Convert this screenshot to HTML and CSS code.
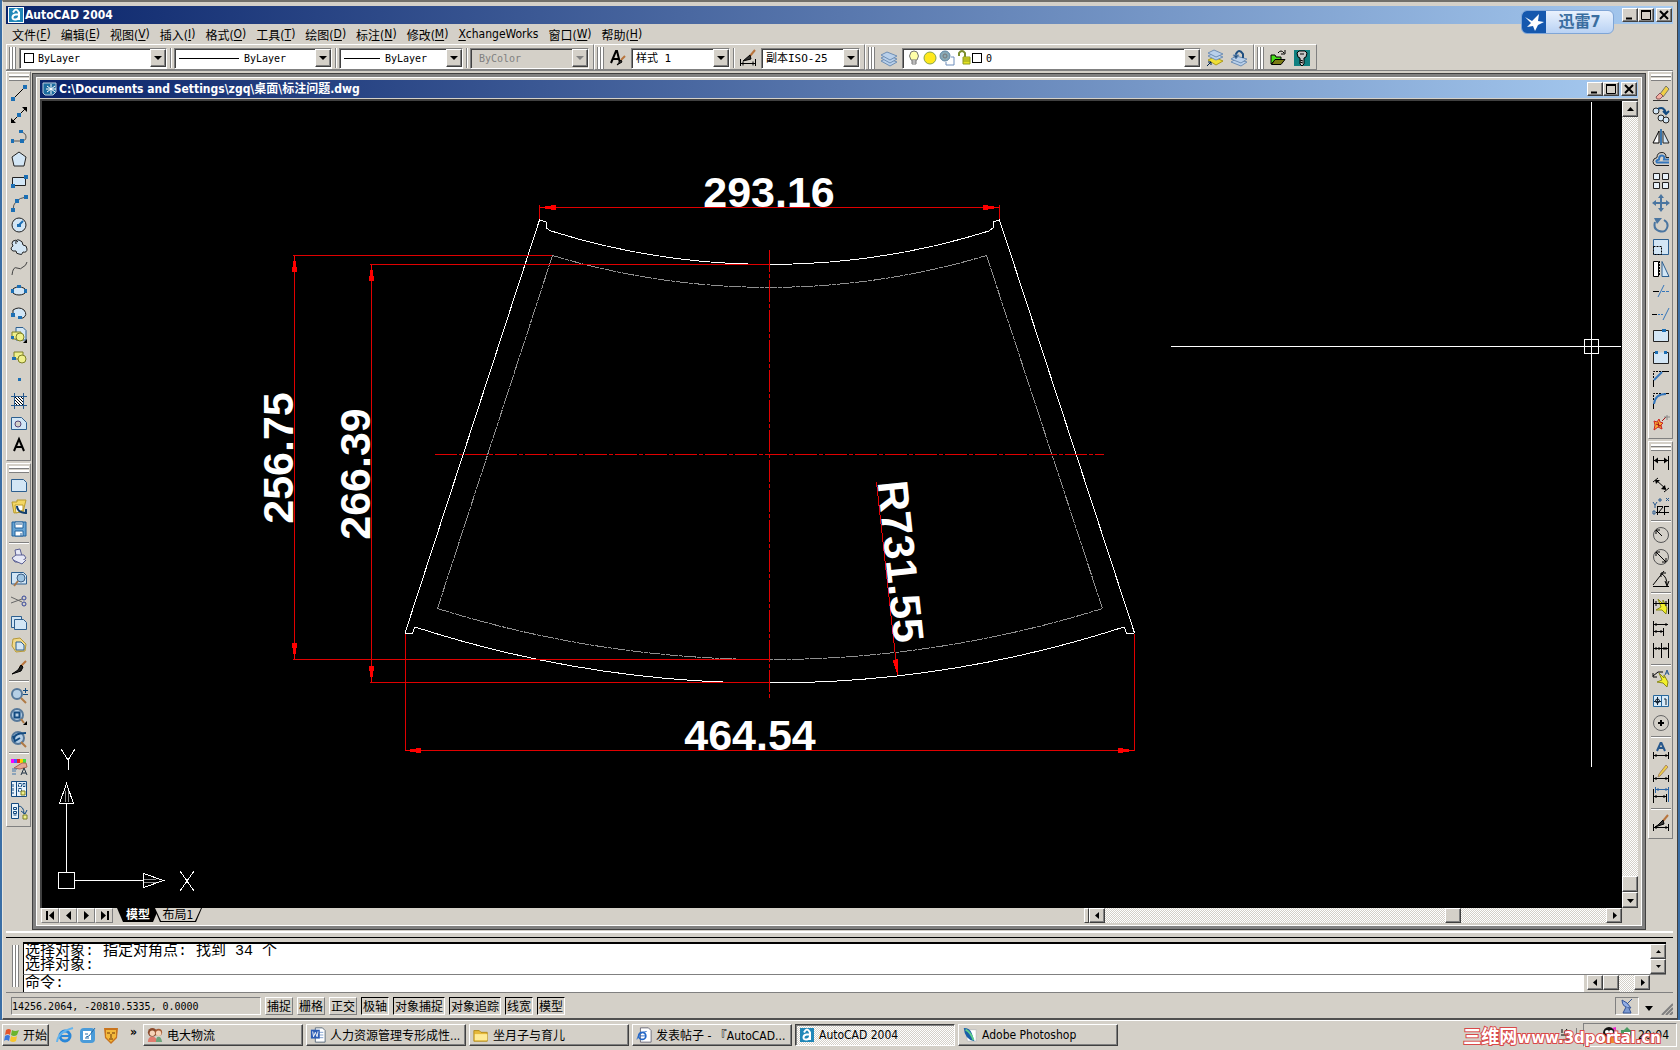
FILE: index.html
```
<!DOCTYPE html>
<html lang="zh-CN">
<head>
    <meta charset="UTF-8">
    <meta name="viewport" content="width=device-width, initial-scale=1.0">
    <title>AutoCAD 2004</title>
    <link rel="stylesheet" href="styles.css">
</head>
<body>
<div class="app">
    <!-- title bar -->
    <header class="titlebar">
        <svg class="logo" viewBox="0 0 16 16"><rect width="16" height="16" fill="#fff"/><rect x="1" y="1" width="14" height="14" fill="#2087b8"/><path d="M5 5.500Q8-.5 11 5.500V13M11 7.500H7.500Q4.500 8 4.500 10.500T8 12.500Q10.500 12 11 9.500" fill="none" stroke="#fff" stroke-width="2"/></svg>
        <span class="caption">AutoCAD 2004</span>
        <div class="winbtns">
            <button aria-label="Minimize"><svg viewBox="0 0 12 10"><path d="M2 8.500h6" stroke-width="2"/></svg></button>
            <button aria-label="Restore"><svg viewBox="0 0 12 10"><path d="M1.500 1v8.500h9V1"/><path d="M1 1h10" stroke-width="2"/></svg></button>
            <button aria-label="Close" class="close"><svg viewBox="0 0 12 10"><path d="M2 1l8 8M10 1L2 9" stroke-width="2"/></svg></button>
        </div>
    </header>
    <a href="#" class="thunder">
        <svg viewBox="0 0 24 24"><path d="M0 0h24v24H0z" fill="#1558ae"/><path d="M3 6l7 4 7-7-1 7 6 1-6 3-3 6-2-5-6 1 4-4z" fill="#fff"/></svg>
        <span>迅雷7</span>
    </a>

    <nav class="menu">
        <button>文件(<u>F</u>)</button>
        <button>编辑(<u>E</u>)</button>
        <button>视图(<u>V</u>)</button>
        <button>插入(<u>I</u>)</button>
        <button>格式(<u>O</u>)</button>
        <button>工具(<u>T</u>)</button>
        <button>绘图(<u>D</u>)</button>
        <button>标注(<u>N</u>)</button>
        <button>修改(<u>M</u>)</button>
        <button><u>X</u>changeWorks</button>
        <button>窗口(<u>W</u>)</button>
        <button>帮助(<u>H</u>)</button>
    </nav>

    <!-- top toolbars -->
    <div class="toolrow">
        <div class="hbar">
            <i class="grip"></i>
            <label class="combo w148"><i class="box"></i><select aria-label="Color"><option>ByLayer</option></select><b></b></label>
            <i class="vsep"></i>
            <label class="combo w158"><i class="line l60"></i><select aria-label="Linetype"><option>ByLayer</option></select><b></b></label>
            <i class="vsep"></i>
            <label class="combo w124"><i class="line l36"></i><select aria-label="Lineweight"><option>ByLayer</option></select><b></b></label>
            <i class="vsep"></i>
            <label class="combo w119 off"><select aria-label="Plot style" disabled><option>ByColor</option></select><b></b></label>
        </div>
        <div class="hbar">
            <i class="grip"></i>
            <button class="tool" aria-label="Text style"><svg viewBox="0 0 18 18"><path d="M2 14L7 2h1l3 12M4 10h6" stroke-width="2"/><path d="M16 7l-4 4" stroke="#b8743c" stroke-width="2"/><path d="M12 11l-4 5 5-3z" fill="#444"/></svg></button>
            <label class="combo w99"><select aria-label="Text style"><option>样式 1</option></select><b></b></label>
            <i class="vsep"></i>
            <button class="tool" aria-label="Dimension style"><svg viewBox="0 0 18 18"><path d="M1.500 10v7M16.500 10v7M2 14.500h14M4 12.500v4M14 12.500v4"/><path d="M16 1l-5 6" stroke="#b8743c" stroke-width="2"/><path d="M11 6l-7 6 8-2z" fill="#333"/></svg></button>
            <label class="combo w99"><select aria-label="Dimension style"><option>副本ISO-25</option></select><b></b></label>
        </div>
        <div class="hbar">
            <i class="grip"></i>
            <button class="tool" aria-label="Layers"><svg viewBox="0 0 18 18" class="sheets"><path d="M1 12l6-3 10 4-7 4z"/><path d="M1 9l6-3 10 4-7 4z"/><path d="M1 6l6-3 10 4-7 4z"/></svg></button>
            <label class="combo w299">
                <svg class="lay" viewBox="0 0 65 16" fill="none" stroke="#777"><path d="M4 10Q1 6 4 2q3-2 6 0 3 4 0 8z" fill="#ffffa8"/><path d="M5 10v4h4v-4M5 12h4"/><circle cx="23" cy="8" r="6" fill="#ffe81c" stroke="#88a34a"/><circle cx="38" cy="6" r="5" fill="#89a9b5" stroke="#5f86a5"/><circle cx="38" cy="6" r="2"/><path d="M44 7h3v8h-8v-3" stroke="#6d8dbb"/><path d="M52 6V3q3-4 6 0v4" stroke="#7b8d2d" stroke-width="2"/><path d="M56 7h7v7h-7zM56 9h7M56 11h7" fill="#e5e323" stroke="#8f9b20"/></svg>
                <i class="box"></i><select aria-label="Layer"><option>0</option></select><b></b>
            </label>
            <button class="tool" aria-label="Make layer current"><svg viewBox="0 0 18 18" class="sheets"><path d="M2 11l6-3 9 4-7 4z" fill="#efdf34" stroke="#ab9a20"/><path d="M2 7l6-3 9 4-7 3z"/><path d="M2 4l6-3 9 4-7 3z"/><path d="M1 17l4-4M2 13h3v3" stroke="#024"/></svg></button>
            <button class="tool" aria-label="Layer previous"><svg viewBox="0 0 18 18" class="sheets"><path d="M1 13l5-3 11 3-6 4z"/><path d="M1 10l5-3 11 3-6 4z"/><path d="M6 7V5q3-6 7 0v4" fill="none" stroke="#1f4f80" stroke-width="2"/><path d="M3 6h6L6 10z" fill="#1f4f80"/></svg></button>
        </div>
        <div class="hbar">
            <i class="grip"></i>
            <button class="tool" aria-label="Open"><svg viewBox="0 0 18 18"><path d="M2 15V6h4l1 2h5v3H6z" fill="#49e01c"/><path d="M2.500 15.500L6 10.500h10l-4 5z" fill="#7a7a14"/><path d="M9 4q3-4 6 0M16 1v4h-4"/></svg></button>
            <button class="tool" aria-label="Key"><svg viewBox="0 0 18 18"><path d="M1 1h16v16H1z" fill="#108080" stroke="none"/><path d="M6 2h6l2 2-1 4-2 1v6l-2 2-2-2V9L5 8 4 4z" fill="#c8c8c8"/><path d="M7 5h4M7 11l3 1M7 13l3 1"/></svg></button>
        </div>
    </div>

    <div class="work">
        <!-- draw and standard toolbars -->
        <aside class="dock">
            <div class="vbar">
                <i class="grip"></i>
                <button aria-label="Line"><svg viewBox="0 0 18 18"><path d="M3 15L15 3"/><path class="dot" d="M1 13h4v4H1zM13 1h4v4h-4z"/></svg></button>
                <button aria-label="Construction line"><svg viewBox="0 0 18 18"><path d="M3 15L15 3"/><path d="M1 17v-5l5 5zM17 1v5l-5-5z" fill="#000" stroke="none"/><path class="dot" d="M7 7h4v4H7z"/></svg></button>
                <button aria-label="Polyline"><svg viewBox="0 0 18 18"><path d="M2 13h9q5 0 5-4t-5-5" stroke="#555"/><path class="dot" d="M1 11h3v4H1zM10 11h4v4h-4zM9 2h4v3H9z"/></svg></button>
                <button aria-label="Polygon"><svg viewBox="0 0 18 18"><path class="pale ink" d="M9 2l7 5-2 9H4L2 7z"/></svg></button>
                <button aria-label="Rectangle"><svg viewBox="0 0 18 18"><path class="pale ink" d="M2.500 5.500h13v8h-13z"/><path class="dot" d="M14 3h4v4h-4zM1 12h4v4H1z"/></svg></button>
                <button aria-label="Arc"><svg viewBox="0 0 18 18"><path d="M3 16Q3 5 16 3" stroke="#555"/><path class="dot" d="M1 14h4v4H1zM5 5h4v4H5zM14 1h4v4h-4z"/></svg></button>
                <button aria-label="Circle"><svg viewBox="0 0 18 18"><circle class="pale ink" cx="9" cy="9" r="7"/><path d="M9 9l4-4" stroke="#1c6fb4" stroke-width="2"/><path class="dot" d="M7 8h4v3H7z"/></svg></button>
                <button aria-label="Revision cloud"><svg viewBox="0 0 18 18"><path class="pale ink" d="M6 6Q5 1 9 2t4 5q4 0 4 4t-4 3q-1 4-4 2-3 0-3-3-4 1-5-2 0-2 2-3-2-3 0-5 3-2 5 1"/></svg></button>
                <button aria-label="Spline"><svg viewBox="0 0 18 18"><path d="M2 15q1-9 5-7t6-1q3-1 4-5" stroke="#444"/></svg></button>
                <button aria-label="Ellipse"><svg viewBox="0 0 18 18"><ellipse class="pale ink" cx="9" cy="9" rx="7" ry="4"/><path class="dot" d="M1 7h3v4H1zM14 7h3v4h-3zM7 3h4v3H7z"/></svg></button>
                <button aria-label="Ellipse arc"><svg viewBox="0 0 18 18"><path class="pale ink" d="M3 11V6q6-4 11 0 4 5-1 8H9"/><path class="dot" d="M1 9h4v4H1zM8 12h4v3H8z"/></svg></button>
                <button aria-label="Insert block"><svg viewBox="0 0 18 18"><path class="pale" d="M6 1.500h7l3 3V14H6z"/><path d="M2 6h9v7H2z" class="yel"/><circle class="yel" cx="10" cy="11" r="4"/><path d="M17 13v4h-4z" fill="#000" stroke="none"/><path class="dot" d="M1 10h3v3H1z"/></svg></button>
                <button aria-label="Make block"><svg viewBox="0 0 18 18"><path class="yel" d="M4 4h9v7H4z"/><circle class="yel" cx="12" cy="11" r="4"/><path class="dot" d="M2 9h4v3H2z"/></svg></button>
                <button aria-label="Point"><svg viewBox="0 0 18 18"><path class="dot" d="M8 8h3v3H8z"/></svg></button>
                <button aria-label="Hatch"><svg viewBox="0 0 18 18"><path d="M1 4.500h16M1 13.500h16M4.500 1v16M13.500 1v16" stroke="#285b90"/><path d="M5 5h8v8H5z" fill="#fff" stroke="none"/><path d="M5 5l8 8M8 5l5 5M5 8l5 5M11 5l2 2M5 11l2 2"/></svg></button>
                <button aria-label="Region"><svg viewBox="0 0 18 18"><path class="pale" d="M1.500 3.500h10l5 5v7h-15z"/><circle cx="8" cy="10" r="3" fill="#d4d0c8" stroke="#547"/></svg></button>
                <button aria-label="Text"><svg viewBox="0 0 18 18"><path d="M4 15L9 3l5 12M6 11h6" stroke-width="2"/></svg></button>
            </div>
            <div class="vbar">
                <i class="grip"></i>
                <button aria-label="New"><svg viewBox="0 0 18 18"><path class="pale" d="M1.500 3.500h12l3 3v9h-15z"/></svg></button>
                <button aria-label="Open"><svg viewBox="0 0 18 18"><path d="M2 4h5V2h9l-3 12-9 1z" fill="#f4d764" stroke="#b99b2c"/><path d="M5 7h8v5l-7 3z" fill="#fff" stroke="#b99b2c"/><path d="M7 8q0 6 8 7M16 11v5" stroke="#123f6d" stroke-width="2"/></svg></button>
                <button aria-label="Save"><svg viewBox="0 0 18 18"><path d="M2 2h14v14H2z" fill="#66a3d3" stroke="#22639c"/><path d="M5 2h8v6H5zM5 11h8v5H5z" fill="#fff" stroke="#22639c"/><path d="M6 4h6M11 13v3" stroke="#22639c"/></svg></button>
                <i class="hsep"></i>
                <button aria-label="Plot"><svg viewBox="0 0 18 18"><path class="vio" d="M5 2l5-1 2 7H6z"/><path class="vio" d="M2 10l4-3h8l2 3-5 4H5z"/><path class="vio" d="M3 12l9 4 4-4"/></svg></button>
                <button aria-label="Preview"><svg viewBox="0 0 18 18"><path class="pale" d="M1.500 2.500h12l3 3V14h-15z"/><circle cx="11" cy="8" r="4" fill="#9fc5e2" stroke="#3c5e83"/><path d="M8 11l-4 5" stroke="#a6774b" stroke-width="2"/></svg></button>
                <button aria-label="Cut"><svg viewBox="0 0 18 18"><path d="M1 5l11 5M1 11l11-4" stroke="#666"/><circle cx="14" cy="6" r="2" stroke="#349"/><circle cx="14" cy="12" r="2" stroke="#349"/></svg></button>
                <button aria-label="Copy"><svg viewBox="0 0 18 18"><path class="pale" d="M1.500 2.500h10v11h-10z"/><path class="pale" d="M4.500 5.500h9l3 3v7h-12z"/></svg></button>
                <button aria-label="Paste"><svg viewBox="0 0 18 18"><path d="M3 3l7-1 6 6-1 7-9 1-4-6z" fill="#f2d98a" stroke="#b59837"/><path class="pale" d="M6 6h5l3 3v5H6z"/></svg></button>
                <button aria-label="Match properties"><svg viewBox="0 0 18 18"><path d="M16 3l-6 6" stroke="#b8743c" stroke-width="2"/><path d="M11 7l-3 5-6 4 9-3 2-4z" fill="#222"/></svg></button>
                <i class="hsep"></i>
                <button aria-label="Zoom realtime"><svg viewBox="0 0 18 18"><circle class="lens" cx="7" cy="8" r="5"/><path d="M11 12l5 5" class="handle"/><path d="M13 4.500h5M15.500 2v5M13 8.500h5" stroke="#124a80"/></svg></button>
                <button aria-label="Zoom window"><svg viewBox="0 0 18 18"><circle class="lens" cx="7" cy="7" r="6"/><path d="M4.500 4.500h5v5h-5z" stroke="#124a80" stroke-width="2"/><path d="M11 11l3 4" class="handle"/><path d="M17 13v4h-4z" fill="#000" stroke="none"/></svg></button>
                <button aria-label="Zoom previous"><svg viewBox="0 0 18 18"><circle class="lens" cx="8" cy="8" r="6"/><path d="M11 12l5 5" class="handle"/><path d="M4 9q0-6 12-6M3 6l2 5 5-3" stroke="#124a80" stroke-width="2"/></svg></button>
                <i class="hsep"></i>
                <button aria-label="Properties"><svg viewBox="0 0 18 18"><path d="M1 1h3v4H1z" fill="#f0f" stroke="none"/><path d="M4 1h3v4H4z" fill="#55f" stroke="none"/><path d="M7 1h3v4H7z" fill="#e22" stroke="none"/><path d="M10 1h3v4h-3z" fill="#fc0" stroke="none"/><path d="M13 1h3v4h-3z" fill="#4d4" stroke="none"/><path d="M4 10l8-5h4l1 4-7 2z" fill="#e4a694" stroke="#a65"/><path d="M2 11h5M2 13h4M2 16h4" stroke="#47a"/><path d="M11 17l3-7 3 7M12 15h4" stroke="#234"/></svg></button>
                <button aria-label="DesignCenter"><svg viewBox="0 0 18 18"><path d="M1.500 1.500h15v15h-15zM6.500 2v14" fill="#e8f3fb" stroke="#124a80"/><path d="M8.500 3.500h3v3h-3zM13 3.500h2v3h-2zM8.500 8.500h3v3h-3zM3 4v10" stroke="#124a80" stroke-dasharray="3 1"/><path class="yel" d="M11 11h4v4h-4z"/></svg></button>
                <button aria-label="Tool palettes"><svg viewBox="0 0 18 18"><path d="M1.500 1.500h7v15h-7z" fill="#e8f3fb" stroke="#124a80"/><path d="M3.500 5.500h3v2h-3zM3.500 9.500h3v2h-3zM3.500 13h3M8 4q6 0 6 8M11 9l4 3 2-4" stroke="#124a80"/><path class="yel" d="M13 13h4v4h-4z"/></svg></button>
            </div>
        </aside>

        <main class="mdi">
            <section class="child">
                <header class="titlebar">
                    <svg class="logo" viewBox="0 0 16 16"><path d="M1 2h13v9l-3 3H3L1 12z" fill="#1b6c9f" stroke="#bcd"/><path d="M9 3v10M4 8h10M5 5l8 6M13 5l-8 6" stroke="#fff"/></svg>
                    <span class="caption">C:\Documents and Settings\zgq\桌面\标注问题.dwg</span>
                    <div class="winbtns">
                        <button aria-label="Minimize"><svg viewBox="0 0 12 10"><path d="M2 8.500h6" stroke-width="2"/></svg></button>
                        <button aria-label="Maximize"><svg viewBox="0 0 12 10"><path d="M1.500 1v8.500h9V1"/><path d="M1 1h10" stroke-width="2"/></svg></button>
                        <button aria-label="Close" class="close"><svg viewBox="0 0 12 10"><path d="M2 1l8 8M10 1L2 9" stroke-width="2"/></svg></button>
                    </div>
                </header>
                <div class="view">
                    <svg class="drawing">
                        <g transform="translate(-42 -101)">
                            <!-- part outline -->
                            <g class="white">
                                <path d="M405 633L539.500 220L546 222V228L551 231A733 733 0 0 0 989 231L993 228V222L999.500 220L1134.500 633L1127 634L1124 627A1150 1150 0 0 1 415 627L412 634Z"/>
                            </g>
                            <g class="grey">
                                <path d="M552.500 255.500A755 755 0 0 0 986.500 255.500M437.500 608.500A1109 1109 0 0 0 1102.500 608.500M552.500 255.500L437.500 608.500M986.500 255.500L1102.500 608.500"/>
                            </g>
                            <!-- dimension lines -->
                            <g class="red">
                                <path d="M539.500 205V219M999.500 205V219M539.500 207.500H999.500"/>
                                <path d="M293 255.500H552M293 659.500H769M294.500 255V659"/>
                                <path d="M370 264.500H769M370 682.500H769M371.500 264V682"/>
                                <path d="M405.500 634V751M1134.500 634V751M405 750.500H1134"/>
                                <path d="M876.500 482.500L897.500 675"/>
                                <path class="axis" d="M769.500 250V699M435 454.500H1104"/>
                            </g>
                            <g class="arrows">
                                <path d="M540 207.500l16-3v6zM999 207.500l-16-3v6zM405 750.500l16-3v6zM1134 750.500l-16-3v6z"/>
                                <path d="M294.500 256l-3 16h6zM294.500 659l-3-16h6zM371.500 265l-3 16h6zM371.500 682l-3-16h6zM897.500 675l-5-15 6-1z"/>
                            </g>
                            <g class="dims">
                                <text x="769" y="207">293.16</text>
                                <text x="750" y="750">464.54</text>
                                <text transform="translate(293 458) rotate(-90)">256.75</text>
                                <text transform="translate(370 474) rotate(-90)">266.39</text>
                                <text transform="translate(886 563) rotate(84)">R731.55</text>
                            </g>
                            <!-- UCS icon -->
                            <g class="white">
                                <path d="M58.500 872.500h16v16h-16zM66.500 872V803M59.500 803.500h14l-7-20zM75 880.500H143M143.500 873.500v14l20-7z"/>
                                <path d="M61 749l7 11 7-11M68.500 760v10M180 871l14 20M194 871l-14 20"/>
                            </g>
                            <g class="grey solid"><path d="M65.500 802v-11M68.500 802v-11M144 879.500h12M144 882.500h12"/></g>
                            <!-- crosshair -->
                            <g class="white">
                                <path d="M1591.500 102V767M1171 346.500H1621M1584.500 339.500h14v14h-14z"/>
                            </g>
                        </g>
                    </svg>
                    <div class="vscroll">
                        <button class="sb" aria-label="Up"><svg viewBox="0 0 7 7"><path d="M0 5h7L3.500 1z"/></svg></button>
                        <i class="track"></i><i class="thumb"></i>
                        <button class="sb" aria-label="Down"><svg viewBox="0 0 7 7"><path d="M0 2h7L3.500 6z"/></svg></button>
                    </div>
                </div>
                <div class="tabs">
                    <div class="nav">
                        <button aria-label="First"><svg viewBox="0 0 9 9"><path d="M0 0h2v9H0zM8 0v9L3 4.500z"/></svg></button>
                        <button aria-label="Previous"><svg viewBox="0 0 9 9"><path d="M7 0v9L2 4.500z"/></svg></button>
                        <button aria-label="Next"><svg viewBox="0 0 9 9"><path d="M2 0v9l5-4.500z"/></svg></button>
                        <button aria-label="Last"><svg viewBox="0 0 9 9"><path d="M1 0v9l5-4.500zM7 0h2v9H7z"/></svg></button>
                    </div>
                    <button class="tab on">模型</button>
                    <button class="tab">布局1</button>
                    <div class="hscroll">
                        <i class="split"></i>
                        <button class="sb" aria-label="Left"><svg viewBox="0 0 7 7"><path d="M5 0v7L1 3.500z"/></svg></button>
                        <i class="track"></i><i class="thumb"></i><i class="track rest"></i>
                        <button class="sb" aria-label="Right"><svg viewBox="0 0 7 7"><path d="M2 0v7l4-3.500z"/></svg></button>
                    </div>
                </div>
            </section>
        </main>

        <!-- modify and dimension toolbars -->
        <aside class="dock">
            <div class="vbar">
                <i class="grip"></i>
                <button aria-label="Erase"><svg viewBox="0 0 18 18"><path d="M1 16.500h15" stroke="#333"/><path d="M8 10l6-8 3 3-6 8z" fill="#f0cf45" stroke="#776"/><path d="M8 9l3 3-3 3H5l-1-2z" fill="#f4b0a4" stroke="#855"/></svg></button>
                <button aria-label="Copy object"><svg viewBox="0 0 18 18"><circle class="pale ink" cx="4" cy="5" r="3"/><circle class="pale ink" cx="9" cy="12" r="3"/><circle class="pale ink" cx="14" cy="14" r="3"/><path d="M6 3q6-3 8 4M11 5l3 3 3-3" stroke="#124a80" stroke-width="2"/></svg></button>
                <button aria-label="Mirror"><svg viewBox="0 0 18 18"><path d="M7 3v12H1z" fill="#fff"/><path class="pale ink" d="M11 3v12h6z"/><path d="M9 1v16" stroke="#3a76ad" stroke-width="2"/></svg></button>
                <button aria-label="Offset"><svg viewBox="0 0 18 18"><path d="M17 15.500H4q-3-1-3-4t4-4q0-5 5-5 4 0 4 5h3" stroke="#222"/><path d="M17 12.500H5q-2-2 2-3 0-4 3-4t2 4h5" stroke="#3476bb" stroke-width="2"/></svg></button>
                <button aria-label="Array"><svg viewBox="0 0 18 18"><path d="M1.500 1.500h6v6h-6zM10.500 1.500h6v6h-6zM1.500 10.500h6v6h-6zM10.500 10.500h6v6h-6z" fill="#e8f2fa" stroke="#222"/></svg></button>
                <button aria-label="Move"><svg viewBox="0 0 18 18"><path d="M9 3v12M3 9h12" class="steel"/><path d="M9 0l3 4H6zM9 18l3-4H6zM0 9l4-3v6zM18 9l-4-3v6z" fill="#4a75a0" stroke="none"/></svg></button>
                <button aria-label="Rotate"><svg viewBox="0 0 18 18"><path d="M12 4q5 3 3 8t-8 3-4-9" class="steel"/><path d="M2 2h8L5 8z" fill="#4a75a0" stroke="none"/></svg></button>
                <button aria-label="Scale"><svg viewBox="0 0 18 18"><path class="pale" d="M1.500 1.500h15v15h-15z"/><path d="M1.500 8.500h8v8h-8z" stroke-dasharray="2 1"/></svg></button>
                <button aria-label="Stretch"><svg viewBox="0 0 18 18"><path d="M1.500 1.500h5v15h-5z" fill="#fff"/><path class="pale" d="M10 1.500l7 15h-7z"/><path d="M7.500 1v15" stroke-dasharray="2 1"/></svg></button>
                <button aria-label="Trim"><svg viewBox="0 0 18 18"><path d="M1 9.500h6"/><path d="M10 9.500h8" stroke="#3476bb" stroke-dasharray="3 1"/><path d="M6 15l6-12" stroke="#3476bb"/></svg></button>
                <button aria-label="Extend"><svg viewBox="0 0 18 18"><path d="M0 10.500h5"/><path d="M6 10.500h6" stroke="#3476bb" stroke-dasharray="2 1"/><path d="M11 16l6-12" stroke="#3476bb"/></svg></button>
                <button aria-label="Break at point"><svg viewBox="0 0 18 18"><path class="pale ink" d="M1.500 4.500h15v11h-15z"/><path class="dot" d="M10 3h4v3h-4z"/></svg></button>
                <button aria-label="Break"><svg viewBox="0 0 18 18"><path class="pale ink" d="M4 4.500H1.500v11h15v-11H14"/><path class="dot" d="M3 3h3v3H3zM12 3h3v3h-3z"/></svg></button>
                <button aria-label="Chamfer"><svg viewBox="0 0 18 18"><path d="M1.500 8V1.500H9" stroke-dasharray="2 1"/><path d="M1.500 17v-7M10 1.500h7"/><path d="M2 10l8-8" stroke="#3476bb" stroke-width="2"/></svg></button>
                <button aria-label="Fillet"><svg viewBox="0 0 18 18"><path d="M1.500 8V1.500H9" stroke-dasharray="2 1"/><path d="M1.500 17v-6M12 1.500h5"/><path d="M2 12q1-10 12-10" stroke="#3476bb" stroke-width="2"/></svg></button>
                <button aria-label="Explode"><svg viewBox="0 0 18 18"><path d="M2 7l3 1 2-3 1 3 3 1-2 2 1 4-4-2-4 3 1-5z" fill="#f9a935" stroke="#c22"/><path d="M4 10l5 2M6 8l1 5" stroke="#a11"/><path d="M10 7l4-4" stroke="#a11"/><path d="M15 1v5M12 3h6" stroke="#888"/></svg></button>
            </div>
            <div class="vbar">
                <i class="grip"></i>
                <button aria-label="Linear dimension"><svg viewBox="0 0 18 18"><path d="M1.500 2v14M16.500 2v14M2 6.500h14"/><path d="M2 6.500l4-3v6zM16 6.500l-4-3v6z" fill="#000" stroke="none"/></svg></button>
                <button aria-label="Aligned dimension"><svg viewBox="0 0 18 18"><path d="M1 6l5-4M12 16l5-4M4 4l10 9"/><path d="M3 4h5l-4 4zM14 14l-1-5-4 4z" fill="#000" stroke="none"/></svg></button>
                <button aria-label="Ordinate dimension"><svg viewBox="0 0 18 18"><path d="M5.500 8v9M4 14.500h13M5 8.500h6M11 9l-4 5M12.500 8v9M12 8.500h5"/><path d="M1 4l2 3 2-3M3 7v3M7 1h2v2H7zM14 0l3 3M17 0l-3 3M1 13h2v3H1z" stroke="#28588c"/></svg></button>
                <i class="hsep"></i>
                <button aria-label="Radius dimension"><svg viewBox="0 0 18 18"><circle cx="9" cy="9" r="7.500" stroke="#555"/><path d="M4 4l6 6M4 8V4h4"/></svg></button>
                <button aria-label="Diameter dimension"><svg viewBox="0 0 18 18"><circle cx="9" cy="9" r="7.500" stroke="#555"/><path d="M4 4l10 10M4 8V4h4M14 10v4h-4"/></svg></button>
                <button aria-label="Angular dimension"><svg viewBox="0 0 18 18"><path d="M1 16.500h16M1 15L12 1M10 4q5 3 5 11M9 7V3h5M13 11l2 5 2-5"/></svg></button>
                <i class="hsep"></i>
                <button aria-label="Quick dimension"><svg viewBox="0 0 18 18"><path d="M6 1l5 5V2l4 8-1 6-4-4H4l5-3z" class="bolt"/><path d="M1.500 1v15M16.500 1v15M2 5.500h14M4 3v5M14 3v5"/></svg></button>
                <button aria-label="Baseline dimension"><svg viewBox="0 0 18 18"><path d="M1.500 1v15M11.500 8v8M2 4.500h14M2 11.500h9M4 3v3M4 10v3M9 10v3M14 3v3"/></svg></button>
                <button aria-label="Continue dimension"><svg viewBox="0 0 18 18"><path d="M1.500 1v15M9.500 1v15M16.500 1v15M1 6.500h16M4 5v3M7 5v3M12 5v3M14 5v3"/></svg></button>
                <i class="hsep"></i>
                <button aria-label="Quick leader"><svg viewBox="0 0 18 18"><path d="M7 3l5 5V5l4 7-1 5-4-4-6-1 5-2z" class="bolt"/><path d="M1 6l5-4h5M1 3v4h4"/><path d="M13 5l2-5 2 5M14 3h2" stroke="#28588c"/></svg></button>
                <button aria-label="Tolerance"><svg viewBox="0 0 18 18"><path d="M1.500 3.500h15v11h-15zM9.500 3v11" fill="#d9ebf8" stroke="#28689c"/><circle cx="5.500" cy="9" r="2" stroke="#123"/><path d="M5.500 5v8M2 9.500h7M12 7h2v6" stroke="#123"/></svg></button>
                <button aria-label="Center mark"><svg viewBox="0 0 18 18"><circle cx="9" cy="9" r="7.500" stroke="#666"/><path d="M9 6v6M6 9h6" stroke-width="2"/></svg></button>
                <i class="hsep"></i>
                <button aria-label="Dimension edit"><svg viewBox="0 0 18 18"><path d="M5 9L9 0l4 9M6 6h6" stroke="#28588c" stroke-width="2"/><path d="M1.500 10v7M16.500 10v7M2 13.500h14M4 12v3M14 12v3"/></svg></button>
                <button aria-label="Dimension text edit"><svg viewBox="0 0 18 18"><path d="M14 1l2 2-8 9-2 1 1-3z" fill="#f0cf45" stroke="#a86"/><path d="M1.500 11v7M16.500 11v7M2 14.500h14M4 13v3M14 13v3"/></svg></button>
                <button aria-label="Dimension update"><svg viewBox="0 0 18 18"><path d="M3.500 1v6M16.500 1v15M4 3.500h12M6 2v3M14 2v3" stroke="#2c65a5"/><path d="M1.500 3v14M14.500 8v8M2 10.500h12M4 9v3M12 9v3"/></svg></button>
                <i class="hsep"></i>
                <button aria-label="Dimension style"><svg viewBox="0 0 18 18"><path d="M1.500 10v7M16.500 10v7M2 13.500h14M4 12v3M14 12v3"/><path d="M16 1l-5 6" stroke="#b8743c" stroke-width="2"/><path d="M11 6l-5 5-3 2 9-3z" fill="#333"/></svg></button>
            </div>
        </aside>
    </div>

    <!-- command window -->
    <section class="command">
        <i class="grip"></i>
        <div class="cmdbody">
            <div class="history">
                <p>选择对象: 指定对角点: 找到 34 个<br>选择对象:</p>
                <div class="vscroll">
                    <button class="sb" aria-label="Up"><svg viewBox="0 0 7 7"><path d="M1 5h5L3.500 2z"/></svg></button>
                    <button class="sb" aria-label="Down"><svg viewBox="0 0 7 7"><path d="M1 2h5L3.500 5z"/></svg></button>
                </div>
            </div>
            <div class="prompt">
                <label for="cmd">命令:</label><input id="cmd" type="text">
                <div class="hscroll">
                    <button class="sb" aria-label="Left"><svg viewBox="0 0 7 7"><path d="M5 0v7L1 3.500z"/></svg></button>
                    <i class="thumb"></i><i class="track"></i>
                    <button class="sb" aria-label="Right"><svg viewBox="0 0 7 7"><path d="M2 0v7l4-3.500z"/></svg></button>
                </div>
            </div>
        </div>
    </section>

    <footer class="status">
        <span class="coords">14256.2064, -20810.5335, 0.0000</span>
        <button>捕捉</button>
        <button>栅格</button>
        <button>正交</button>
        <button class="down">极轴</button>
        <button class="down">对象捕捉</button>
        <button class="down">对象追踪</button>
        <button class="down">线宽</button>
        <button class="down">模型</button>
        <span class="comm"><svg viewBox="0 0 16 16"><path d="M3 2q0 8 9 8L8 5z" fill="#90aee8" stroke="#345496"/><path d="M8 6l5-5M7 9l-3 6h8l-2-5" fill="#7d9bd2" stroke="#345496"/></svg></span>
        <svg class="drop" viewBox="0 0 8 5"><path d="M0 0h8L4 5z"/></svg>
        <svg class="size" viewBox="0 0 12 12"><path d="M1 12L12 1M5 12l7-7M9 12l3-3" stroke="#808080" stroke-width="2"/></svg>
    </footer>
</div>

<div class="taskbar">
    <button class="start"><svg viewBox="0 0 16 16"><path d="M2 3q3-2 5 0L6 8Q4 6 1 8z" fill="#e4552b"/><path d="M8 3q3 2 7 0l-2 5q-3 2-6 0z" fill="#6ab52f"/><path d="M1 9q3-2 5 0l-1 5q-3-2-5 0z" fill="#3b78dc"/><path d="M7 9q3 2 6 0l-1 5q-3 2-6 0z" fill="#f6c52d"/></svg>开始</button>
    <div class="quick">
        <a href="#" aria-label="Internet Explorer"><svg viewBox="0 0 18 18" fill="none"><circle cx="9" cy="10" r="5" stroke="#2a87d8" stroke-width="3"/><path d="M4 10h10" stroke="#2a87d8" stroke-width="2"/><path d="M1 16Q2 6 17 2" stroke="#63b4ee" stroke-width="2"/></svg></a>
        <a href="#" aria-label="Show desktop"><svg viewBox="0 0 18 18"><rect x="1" y="2" width="15" height="15" rx="4" fill="#4a9bd9"/><path d="M4 5h8v9H4z" fill="#fff"/><path d="M16 2l-6 8-3 1M6 12h4M6 8h3" fill="none" stroke="#256ba8"/></svg></a>
        <a href="#" aria-label="Lion"><svg viewBox="0 0 18 18"><path d="M2 2h14l-1 10-6 6-6-6z" fill="#c9741c"/><path d="M4 4h10v7l-5 5-5-5z" fill="#f3b93b"/><path d="M5 7h3M10 7h3M9 8v4M7 13h4" stroke="#6c3408" fill="none"/></svg></a>
    </div>
    <span class="more">»</span>
    <button class="task"><svg viewBox="0 0 18 18"><circle cx="6" cy="6" r="5" fill="#8a4a2c"/><circle cx="13" cy="6" r="4" fill="#a55c36"/><circle cx="6" cy="7" r="3" fill="#f6d3b8"/><circle cx="13" cy="7" r="3" fill="#f6d3b8"/><path d="M1 17q0-6 5-6t5 6z" fill="#e07b6e"/><path d="M10 17q0-6 3-6t4 6z" fill="#6ca37b"/></svg>电大物流</button>
    <button class="task"><svg viewBox="0 0 18 18"><path d="M6 1h8l3 3v13H6z" fill="#fff" stroke="#567"/><path d="M8 6h7M8 9h7M8 12h7" stroke="#79c"/><path d="M1 3h10v10H1z" fill="#2c5cb4"/><path d="M3 5l1 6 2-5 2 5 1-6" fill="none" stroke="#fff"/></svg>人力资源管理专形成性...</button>
    <button class="task"><svg viewBox="0 0 18 18"><path d="M1 4h6l2 2h7v10H1z" fill="#e6b93a" stroke="#b18818"/><path d="M2 8h14v7H2z" fill="#ffeb96"/></svg>坐月子与育儿</button>
    <button class="task"><svg viewBox="0 0 18 18"><path d="M5 1h9l3 3v13H5z" fill="#fff" stroke="#667"/><circle cx="7" cy="10" r="4" fill="none" stroke="#2468c8" stroke-width="2"/><path d="M4 10h7M1 14Q3 6 12 5" fill="none" stroke="#2468c8"/></svg>发表帖子 - 『AutoCAD...</button>
    <button class="task on"><svg viewBox="0 0 16 16"><rect x="1" y="1" width="14" height="14" fill="#2087b8"/><path d="M5 5.500Q8-.5 11 5.500V13M11 7.500H7.500Q4.500 8 4.500 10.500T8 12.500Q10.500 12 11 9.500" fill="none" stroke="#fff" stroke-width="2"/></svg>AutoCAD 2004</button>
    <button class="task"><svg viewBox="0 0 18 18"><path d="M4 3h12v13H6z" fill="#fff" stroke="#bbb"/><path d="M2 1q7 0 9 6t3 9Q3 14 2 1z" fill="#1a5fa8"/><path d="M4 3q6 3 9 12" stroke="#5fd08a" fill="none" stroke-width="2"/></svg>Adobe Photoshop</button>
    <span class="lang"><svg viewBox="0 0 12 14"><path d="M3 1v4M8 1L5 5M2 7h7M3 12h8" stroke="#000" fill="none"/></svg></span>
    <div class="tray">
        <svg viewBox="0 0 18 18"><circle cx="9" cy="7" r="6" fill="#111"/><circle cx="7" cy="6" r="2" fill="#fff"/><circle cx="11" cy="6" r="2" fill="#fff"/><path d="M3 17q0-7 6-7t6 7z" fill="#f08c2a"/><path d="M12 2l4-1v4z" fill="#e2c"/></svg>
        <svg viewBox="0 0 18 18"><path d="M9 1l3 3h4l-1 5-6 8-6-8V4h3z" fill="#4a9a62"/><path d="M6 6h6v6H6z" fill="#fff"/></svg>
        <span>20:04</span>
    </div>
    <div class="mark"><span>三维网</span>www.3dportal.cn</div>
</div>
</body>
</html>
```
FILE: styles.css
```
*
{
    box-sizing: border-box;
}
body
{
    margin: 0;
    height: 100vh;
    display: flex;
    flex-direction: column;
    overflow: hidden;
    background-color: #3a6ea5;
    color: #000000;
    font-family: "DejaVu Sans Condensed", "Noto Sans CJK SC", sans-serif;
    font-size: 12px;
}
button
{
    font: inherit;
    color: inherit;
    margin: 0;
    padding: 0;
    border: 0;
    background: none;
    display: flex;
    align-items: center;
    justify-content: center;
    white-space: nowrap;
}
svg
{
    display: block;
    flex: none;
}
.app
{
    flex: 1;
    min-height: 0;
    margin: 0 2px;
    padding: 4px 4px 0 3px;
    display: flex;
    flex-direction: column;
    position: relative;
    background-color: #d4d0c8;
    border: 1px solid #e8e6e0;
    border-top: 2px solid #716f6a;
    border-right-color: #404040;
    border-bottom: 2px solid #505050;
}

/* title bars */
.titlebar
{
    height: 18px;
    flex: none;
    display: flex;
    align-items: center;
    padding: 0 1px 0 2px;
    background: linear-gradient(to right, #0a246a, #a6caf0);
    color: #ffffff;
    font-weight: bold;
}
.logo
{
    width: 16px;
    height: 16px;
}
.caption
{
    margin-left: 1px;
    flex: 1;
    line-height: 18px;
    white-space: nowrap;
}
.winbtns
{
    display: flex;
}
.winbtns button
{
    width: 16px;
    height: 14px;
}
.winbtns .close
{
    margin-left: 2px;
}
.winbtns button, .sb, .thumb, .combo b
{
    background-color: #d4d0c8;
    border: 1px solid;
    border-color: #ffffff #404040 #404040 #ffffff;
    box-shadow: inset -1px -1px #808080;
}
.winbtns svg
{
    width: 12px;
    height: 10px;
    fill: none;
    stroke: #000000;
}
.thunder
{
    position: absolute;
    top: 8px;
    right: 63px;
    width: 93px;
    height: 24px;
    display: flex;
    border: 1px solid #7fa5d6;
    border-radius: 6px;
    overflow: hidden;
    background: linear-gradient(#eaf2fd, #b9d2f4);
    color: #3a6ea0;
    font-size: 16px;
    font-weight: bold;
    text-decoration: none;
}
.thunder svg
{
    width: 24px;
    height: 24px;
}
.thunder span
{
    flex: 1;
    text-align: center;
    line-height: 22px;
}

.menu
{
    height: 20px;
    flex: none;
    display: flex;
    padding-left: 1px;
}
.menu button
{
    padding: 0 5px;
}
.menu u
{
    text-underline-offset: 2px;
}

/* top toolbars */
.toolrow
{
    height: 27px;
    flex: none;
    display: flex;
    border-bottom: 1px solid #808080;
}
.hbar
{
    display: flex;
    align-items: center;
    gap: 3px;
    padding: 2px 4px 0 2px;
    border: 1px solid;
    border-color: #ffffff #808080 #808080 #ffffff;
}
.hbar .grip, .command .grip
{
    width: 7px;
    height: 22px;
    border: solid #808080;
    border-width: 0 1px;
    background: linear-gradient(to right, #ffffff 2px, #808080 2px 3px, #ffffff 3px);
}
.vsep
{
    width: 1px;
    height: 20px;
    background-color: #808080;
    box-shadow: 1px 0 #ffffff;
}
.combo
{
    height: 21px;
    display: flex;
    align-items: center;
    padding-left: 4px;
    background-color: #ffffff;
    border: 1px solid;
    border-color: #808080 #ffffff #ffffff #808080;
    box-shadow: inset 1px 1px #404040;
}
.combo select
{
    flex: 1;
    min-width: 0;
    appearance: none;
    border: 0;
    padding: 0;
    background: none;
    color: #000000;
    opacity: 1;
    font-family: "DejaVu Sans Mono", "Noto Sans CJK SC", monospace;
    font-size: 10px;
}
.combo b
{
    width: 16px;
    height: 18px;
    display: flex;
    align-items: center;
    justify-content: center;
}
.combo b::after
{
    content: "";
    border: 4px solid transparent;
    border-top-color: #000000;
    border-bottom: 0;
}
.combo.off
{
    background-color: #d4d0c8;
    padding-left: 8px;
}
.combo.off select
{
    color: #808080;
}
.combo.off b::after
{
    border-top-color: #808080;
}
.w148 { width: 148px; }
.w158 { width: 158px; }
.w124 { width: 124px; }
.w119 { width: 119px; }
.w99 { width: 99px; }
.combo.w99 select { font-size: 11px; }
.w299 { width: 299px; }
.box
{
    width: 10px;
    height: 10px;
    margin-right: 4px;
    border: 1px solid #000000;
}
.line
{
    height: 1px;
    margin-right: 5px;
    background-color: #000000;
}
.l60 { width: 60px; }
.l36 { width: 36px; }
.lay
{
    width: 65px;
    height: 16px;
}
.tool svg, .vbar svg
{
    width: 18px;
    height: 18px;
    fill: none;
    stroke: #000000;
}
.tool
{
    width: 21px;
}
.tool .sheets
{
    fill: #b9d0ea;
    stroke: #6f8fb5;
}

/* side toolbars */
.work
{
    flex: 1;
    min-height: 0;
    display: flex;
}
.dock
{
    width: 25px;
    display: flex;
    flex-direction: column;
    gap: 2px;
}
.vbar
{
    display: flex;
    flex-direction: column;
    align-items: center;
    padding-bottom: 4px;
    border: 1px solid;
    border-color: #ffffff #808080 #808080 #ffffff;
}
.vbar .grip
{
    width: 20px;
    height: 7px;
    margin: 2px 0 1px;
    border: solid #808080;
    border-width: 0 0 1px 0;
    background: linear-gradient(#ffffff 2px, #808080 2px 3px, #d4d0c8 3px 4px, #ffffff 4px);
}
.vbar button
{
    width: 22px;
    height: 22px;
}
.hsep
{
    width: 20px;
    height: 2px;
    margin: 2px 0;
    border-top: 1px solid #808080;
    background-color: #ffffff;
}
.vbar .dot { fill: #1c6fb4; stroke: none; }
.vbar .pale { fill: #d3e6f5; stroke: #2d5f8f; }
.vbar .ink { stroke: #222222; }
.vbar .yel { fill: #eff08c; stroke: #7c7f26; }
.vbar .vio { fill: #e6e8f6; stroke: #5a5f93; }
.vbar .lens { fill: #b5cfe6; stroke: #56789a; stroke-width: 2; }
.vbar .handle { stroke: #b07a45; stroke-width: 2; }
.vbar .steel { stroke: #4a75a0; stroke-width: 2; }
.vbar .bolt { fill: #f2f02a; stroke: #8a8a1c; }

/* drawing window */
.mdi
{
    flex: 1;
    min-width: 0;
    margin: 2px 2px 0 1px;
    padding: 3px;
    display: flex;
    background-color: #808080;
    border: 1px solid #404040;
}
.child
{
    flex: 1;
    min-width: 0;
    display: flex;
    flex-direction: column;
    padding: 2px 3px;
    background-color: #d4d0c8;
    border: 1px solid #ffffff;
}
.view
{
    flex: 1;
    min-height: 0;
    display: flex;
    margin-top: 1px;
    border: solid #404040;
    border-width: 2px 0 0 2px;
}
.drawing
{
    flex: 1;
    min-width: 0;
    height: 100%;
    background-color: #000000;
}
.drawing path
{
    fill: none;
    shape-rendering: crispEdges;
}
.white { stroke: #ffffff; }
.grey { stroke: #909090; stroke-dasharray: 12 1 4 1; }
.grey.solid { stroke-dasharray: none; }
.red { stroke: #e00000; }
.axis { stroke-dasharray: 22 2 4 2; }
.drawing .arrows path { fill: #ff0000; }
.dims
{
    fill: #ffffff;
    font-family: "Liberation Sans", Arial, sans-serif;
    font-size: 43px;
    font-weight: bold;
    text-anchor: middle;
}
.vscroll
{
    width: 16px;
    display: flex;
    flex-direction: column;
}
.sb
{
    width: 16px;
    height: 16px;
    flex: none;
}
.sb svg
{
    width: 7px;
    height: 7px;
}
.thumb
{
    width: 16px;
    height: 16px;
    flex: none;
}
.track
{
    flex: 1;
    background: conic-gradient(#ffffff 25%, #d4d0c8 0 50%, #ffffff 0 75%, #d4d0c8 0) 0 0 / 2px 2px;
}
.tabs
{
    height: 15px;
    flex: none;
    display: flex;
    padding: 0 16px 0 1px;
}
.nav
{
    display: flex;
    margin-right: 4px;
}
.nav button
{
    width: 18px;
    border: 1px solid;
    border-color: #ffffff #808080 #808080 #ffffff;
}
.nav svg
{
    width: 9px;
    height: 9px;
}
.tab
{
    width: 42px;
    height: 14px;
    line-height: 14px;
    background-color: #000000;
    clip-path: polygon(0 0, 100% 0, 36px 100%, 6px 100%);
    position: relative;
}
.tab.on
{
    color: #ffffff;
    font-weight: bold;
}
.tab:not(.on)
{
    z-index: 0;
    width: 48px;
    margin-left: -5px;
    clip-path: polygon(0 0, 100% 0, 42px 100%, 6px 100%);
}
.tab:not(.on)::before
{
    content: "";
    position: absolute;
    inset: 0 1px 1px 1px;
    z-index: -1;
    background-color: #d4d0c8;
    clip-path: polygon(0 0, 100% 0, 40px 100%, 6px 100%);
}
.hscroll
{
    display: flex;
}
.tabs .hscroll
{
    width: 34%;
    margin-left: auto;
}
.split
{
    width: 5px;
    border: 1px solid;
    border-color: #ffffff #404040 #404040 #ffffff;
}
.hscroll .sb, .hscroll .thumb
{
    height: 15px;
}
.rest
{
    flex: none;
    width: 27%;
}

/* command window */
.command
{
    height: 62px;
    flex: none;
    display: flex;
    gap: 4px;
    padding: 4px 7px 0 6px;
    margin-top: 1px;
    border-top: 2px solid #ffffff;
    border-bottom: 1px solid #808080;
    background: linear-gradient(#d4d0c8 4px, #000000 4px 5px, #d4d0c8 5px);
}
.command .grip
{
    height: 42px;
    margin-top: 8px;
}
.cmdbody
{
    flex: 1;
    margin-top: 5px;
    display: flex;
    flex-direction: column;
    font-family: "Liberation Mono", "Noto Sans CJK SC", monospace;
    font-size: 15px;
}
.history
{
    height: 33px;
    display: flex;
    background-color: #ffffff;
    border: solid #000000;
    border-width: 2px 0 1px 1px;
    border-bottom-color: #808080;
}
.history p
{
    flex: 1;
    margin: 1px;
    line-height: 14px;
}
.history .sb
{
    height: 15px;
}
.prompt
{
    height: 17px;
    display: flex;
    padding-right: 16px;
    border-left: 1px solid #000000;
}
.prompt label
{
    padding: 1px 0 0 1px;
    background-color: #ffffff;
    line-height: 16px;
}
.prompt input
{
    flex: 1;
    min-width: 0;
    border: 0;
    padding: 0;
    font: inherit;
    background-color: #ffffff;
}
.prompt .hscroll
{
    width: 66px;
    padding-left: 3px;
}

/* status bar */
.status
{
    height: 25px;
    flex: none;
    display: flex;
    align-items: center;
    gap: 4px;
    padding: 0 0 0 5px;
}
.coords
{
    width: 250px;
    height: 18px;
    line-height: 18px;
    border: 1px solid;
    border-color: #808080 #ffffff #ffffff #808080;
    font-family: "DejaVu Sans Mono", monospace;
    font-size: 10px;
}
.status button
{
    height: 18px;
    padding: 0 1px;
    border: 1px solid;
    border-color: #ffffff #808080 #808080 #ffffff;
}
.status .down
{
    border-color: #000000 #ffffff #ffffff #000000;
}
.comm
{
    margin-left: auto;
    width: 24px;
    height: 18px;
    padding-left: 3px;
    border: 1px solid;
    border-color: #808080 #ffffff #ffffff #808080;
}
.comm svg
{
    width: 16px;
    height: 16px;
}
.drop
{
    width: 8px;
    height: 5px;
    margin: 6px 4px 0 2px;
}
.size
{
    width: 12px;
    height: 12px;
    margin-top: 6px;
}

/* taskbar */
.taskbar
{
    height: 30px;
    flex: none;
    position: relative;
    display: flex;
    align-items: center;
    padding: 0 3px 2px 2px;
    background-color: #d4d0c8;
    border-top: 1px solid #ffffff;
}
.start, .task
{
    height: 22px;
    border: 1px solid;
    border-color: #ffffff #404040 #404040 #ffffff;
    box-shadow: inset -1px -1px #808080;
}
.start
{
    width: 47px;
    gap: 3px;
}
.start svg
{
    width: 16px;
    height: 16px;
}
.quick
{
    display: flex;
    gap: 5px;
    margin-left: 7px;
}
.quick svg, .tray svg
{
    width: 18px;
    height: 18px;
}
.more
{
    width: 23px;
    text-align: center;
    font-weight: bold;
    margin: 0 -2px 6px 2px;
}
.task
{
    width: 160px;
    margin-right: 3px;
    padding-left: 3px;
    gap: 4px;
    justify-content: flex-start;
}
.task svg
{
    width: 16px;
    height: 16px;
}
.task.on
{
    border-color: #404040 #ffffff #ffffff #404040;
    box-shadow: inset 1px 1px #808080;
    background: conic-gradient(#ffffff 25%, #d4d0c8 0 50%, #ffffff 0 75%, #d4d0c8 0) 0 0 / 2px 2px;
}
.lang
{
    margin-left: auto;
    padding-right: 5px;
    border-right: 1px solid #808080;
}
.lang svg
{
    width: 12px;
    height: 14px;
}
.tray
{
    width: 94px;
    height: 24px;
    margin-left: 6px;
    padding: 0 7px 0 16px;
    display: flex;
    align-items: center;
    border: 1px solid;
    border-color: #808080 #ffffff #ffffff #808080;
}
.tray span
{
    margin-left: auto;
}
.mark
{
    position: absolute;
    right: 19px;
    bottom: 2px;
    color: #ffffff;
    font-family: "DejaVu Sans", "Noto Sans CJK SC", sans-serif;
    font-size: 15px;
    font-weight: bold;
    line-height: 20px;
    white-space: nowrap;
    -webkit-text-stroke: 2px #d84848;
    paint-order: stroke fill;
}
.mark span
{
    font-size: 18px;
}
```
